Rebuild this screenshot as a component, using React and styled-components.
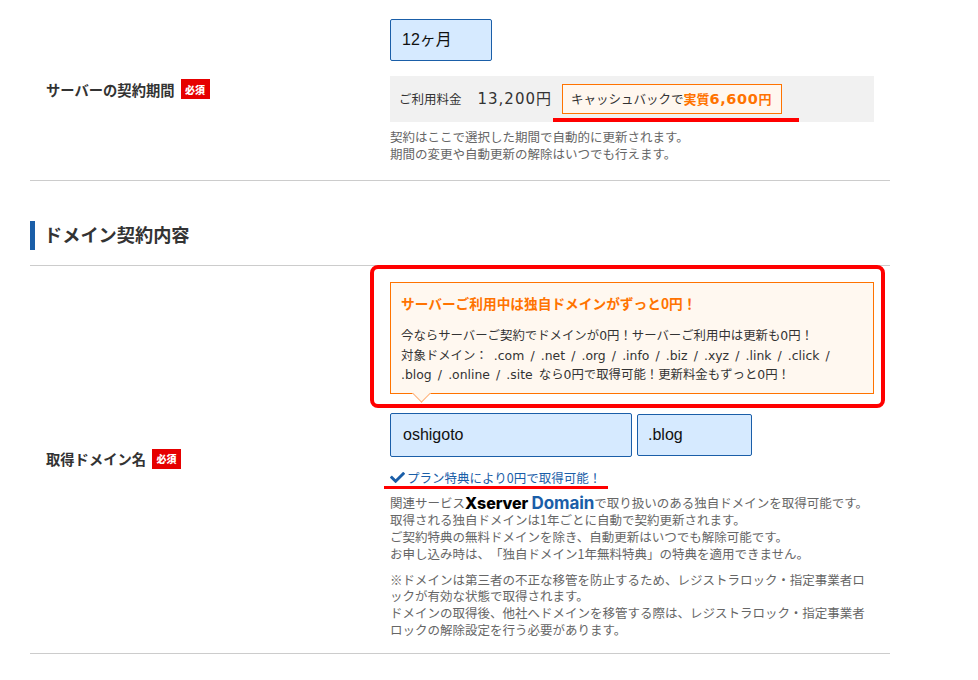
import { FaCheck } from "react-icons/fa";
import styled, { createGlobalStyle } from "styled-components";

const GlobalStyle = createGlobalStyle`
  html, body {
    margin: 0;
    padding: 0;
    background: #ffffff;
  }

  body {
    font-family: "Noto Sans CJK JP", sans-serif;
    color: #333333;
    text-spacing-trim: space-all;
  }
`;

export default function App() {
  return (
    <>
      <GlobalStyle />
      <Page>
        <FormRow $paddingTop={19} $paddingBottom={18}>
          <Label>
            サーバーの契約期間<Required>必須</Required>
          </Label>
          <Content>
            <SelectBox $width={102} $height={42} $paddingLeft={11} $lift={5}>12ヶ月</SelectBox>
            <PriceBar>
              <PriceLabel>ご利用料金</PriceLabel>
              <PriceValue>13,200<small>円</small></PriceValue>
              <Cashback>
                キャッシュバックで<strong>実質<span>6,600</span>円</strong>
              </Cashback>
              <PriceUnderline />
            </PriceBar>
            <Note $marginTop={7}>
              契約はここで選択した期間で自動的に更新されます。
              <br />
              期間の変更や自動更新の解除はいつでも行えます。
            </Note>
          </Content>
        </FormRow>

        <SectionTitle>ドメイン契約内容</SectionTitle>

        <FormRow $paddingTop={16} $paddingBottom={15}>
          <Label>
            取得ドメイン名<Required>必須</Required>
          </Label>
          <Content>
            <InfoWrap>
              <InfoBox>
                <InfoTitle>サーバーご利用中は独自ドメインがずっと0円！</InfoTitle>
                <InfoText>
                  今ならサーバーご契約でドメインが0円！サーバーご利用中は更新も0円！
                  <br />
                  対象ドメイン： .com / .net / .org / .info / .biz / .xyz / .link / .click /
                  <br />
                  .blog / .online / .site なら0円で取得可能！更新料金もずっと0円！
                </InfoText>
              </InfoBox>
              <RedFrame />
            </InfoWrap>

            <DomainRow>
              <SelectBox $width={242} $height={44} $paddingLeft={12}>oshigoto</SelectBox>
              <SelectBox $width={115} $height={42} $paddingLeft={10}>.blog</SelectBox>
            </DomainRow>

            <CheckLine>
              <FaCheck size={15} />
              プラン特典により0円で取得可能！
              <CheckUnderline />
            </CheckLine>

            <Note $marginTop={8}>
              関連サービス
              <ServiceLogo>
                Xserver <span>Domain</span>
              </ServiceLogo>
              で取り扱いのある独自ドメインを取得可能です。
              <br />
              取得される独自ドメインは1年ごとに自動で契約更新されます。
              <br />
              ご契約特典の無料ドメインを除き、自動更新はいつでも解除可能です。
              <br />
              お申し込み時は、「独自ドメイン1年無料特典」の特典を適用できません。
            </Note>
            <Note $marginTop={9}>
              ※ドメインは第三者の不正な移管を防止するため、レジストラロック・指定事業者ロックが有効な状態で取得されます。
              <br />
              ドメインの取得後、他社へドメインを移管する際は、レジストラロック・指定事業者ロックの解除設定を行う必要があります。
            </Note>
          </Content>
        </FormRow>
      </Page>
    </>
  );
}

const Page = styled.div`
  width: 860px;
  margin-left: 30px;
`;

const FormRow = styled.div`
  display: grid;
  grid-template-columns: 360px 484px;
  align-items: center;
  padding: ${(props) => props.$paddingTop}px 0 ${(props) => props.$paddingBottom}px;
  border-bottom: 1px solid #cccccc;
`;

const Label = styled.div`
  display: flex;
  align-items: center;
  margin-bottom: 3px;
  padding-left: 16px;
  font-size: 14.3px;
  font-weight: 700;
  color: #333333;
`;

const Required = styled.span`
  display: inline-flex;
  align-items: center;
  justify-content: center;
  width: 29px;
  height: 20px;
  margin-left: 6px;
  background: #e60000;
  color: #ffffff;
  font-size: 10px;
  font-weight: 900;
`;

const Content = styled.div`
  display: flex;
  flex-direction: column;
  align-items: stretch;
`;

const SelectBox = styled.div`
  display: flex;
  align-items: center;
  flex: none;
  box-sizing: border-box;
  width: ${(props) => props.$width}px;
  height: ${(props) => props.$height}px;
  padding-left: ${(props) => props.$paddingLeft}px;
  padding-bottom: ${(props) => props.$lift || 0}px;
  background: #d6eaff;
  border: 1px solid #1a5ea8;
  border-radius: 2px;
  color: #111111;
  font-family: "Liberation Sans", "Noto Sans CJK JP", sans-serif;
  font-size: 16px;
`;

const PriceBar = styled.div`
  position: relative;
  display: flex;
  align-items: center;
  height: 46px;
  margin-top: 15px;
  padding-left: 9px;
  background: #f1f1f1;
`;

const PriceLabel = styled.span`
  padding-bottom: 2px;
  font-size: 12.5px;
  color: #333333;
`;

const PriceValue = styled.span`
  margin-left: 16px;
  padding-bottom: 4px;
  font-family: "DejaVu Sans", "Noto Sans CJK JP", sans-serif;
  font-size: 15px;
  letter-spacing: 1px;
  color: #333333;

  small {
    font-size: 15px;
    letter-spacing: 0;
  }
`;

const Cashback = styled.div`
  display: flex;
  align-items: center;
  box-sizing: border-box;
  width: 220px;
  height: 30px;
  margin-left: 11px;
  padding: 0 0 2px 8px;
  background: #fff7ef;
  border: 1px solid #ff7300;
  font-size: 12.5px;
  color: #333333;

  strong {
    color: #ff7300;
    font-size: 13px;
    font-weight: 700;
  }

  span {
    font-family: "DejaVu Sans", sans-serif;
    font-size: 14.5px;
    letter-spacing: 0.6px;
  }
`;

const PriceUnderline = styled.span`
  position: absolute;
  left: 163px;
  bottom: 0;
  width: 246px;
  height: 4px;
  background: #ff0000;
`;

const Note = styled.p`
  margin: ${(props) => props.$marginTop}px 0 0;
  font-size: 12.5px;
  line-height: 16.7px;
  color: #666666;
`;

const SectionTitle = styled.h2`
  display: flex;
  align-items: center;
  box-sizing: border-box;
  height: 29px;
  margin: 40px 0 15px;
  padding: 0 0 4px 9px;
  border-left: 5px solid #1a5ea8;
  font-size: 18.2px;
  font-weight: 700;
  color: #333333;

  & + div {
    border-top: 1px solid #cccccc;
  }
`;

const InfoWrap = styled.div`
  position: relative;
  margin-bottom: 19px;
`;

const InfoBox = styled.div`
  position: relative;
  box-sizing: border-box;
  height: 112px;
  padding: 10px 10px 0;
  background: #fff8f0;
  border: 1px solid #ff7300;

  &::after {
    content: "";
    position: absolute;
    left: 24px;
    bottom: -7px;
    width: 12px;
    height: 12px;
    background: #fff8f0;
    border-right: 1px solid #ffb27a;
    border-bottom: 1px solid #ffb27a;
    transform: rotate(45deg);
  }
`;

const InfoTitle = styled.div`
  font-size: 13.7px;
  font-weight: 700;
  line-height: 20px;
  color: #ff7300;
`;

const InfoText = styled.p`
  margin: 13px 0 0;
  font-family: "DejaVu Sans", "Noto Sans CJK JP", sans-serif;
  font-size: 12.4px;
  line-height: 19.4px;
  word-spacing: 2.2px;
  color: #333333;
`;

const RedFrame = styled.span`
  position: absolute;
  top: -17px;
  left: -20px;
  width: 507px;
  height: 135px;
  border: 4px solid #ff0000;
  border-radius: 8px;
`;

const DomainRow = styled.div`
  display: flex;
  align-items: center;
  gap: 5px;
`;

const CheckLine = styled.div`
  position: relative;
  display: flex;
  align-items: center;
  box-sizing: border-box;
  gap: 2px;
  height: 18px;
  margin-top: 12px;
  padding-bottom: 1px;
  font-size: 12.5px;
  color: #1a5ea8;

  svg {
    flex: none;
  }
`;

const CheckUnderline = styled.span`
  position: absolute;
  left: -6px;
  bottom: -2px;
  width: 224px;
  height: 3px;
  background: #ff0000;
`;

const ServiceLogo = styled.b`
  font-family: Inter, sans-serif;
  font-size: 16px;
  font-weight: 800;
  letter-spacing: -0.1px;
  color: #000000;
  vertical-align: -1px;
  line-height: 1;

  span {
    font-size: 17px;
    font-weight: 700;
    color: #1a5ea8;
  }
`;
